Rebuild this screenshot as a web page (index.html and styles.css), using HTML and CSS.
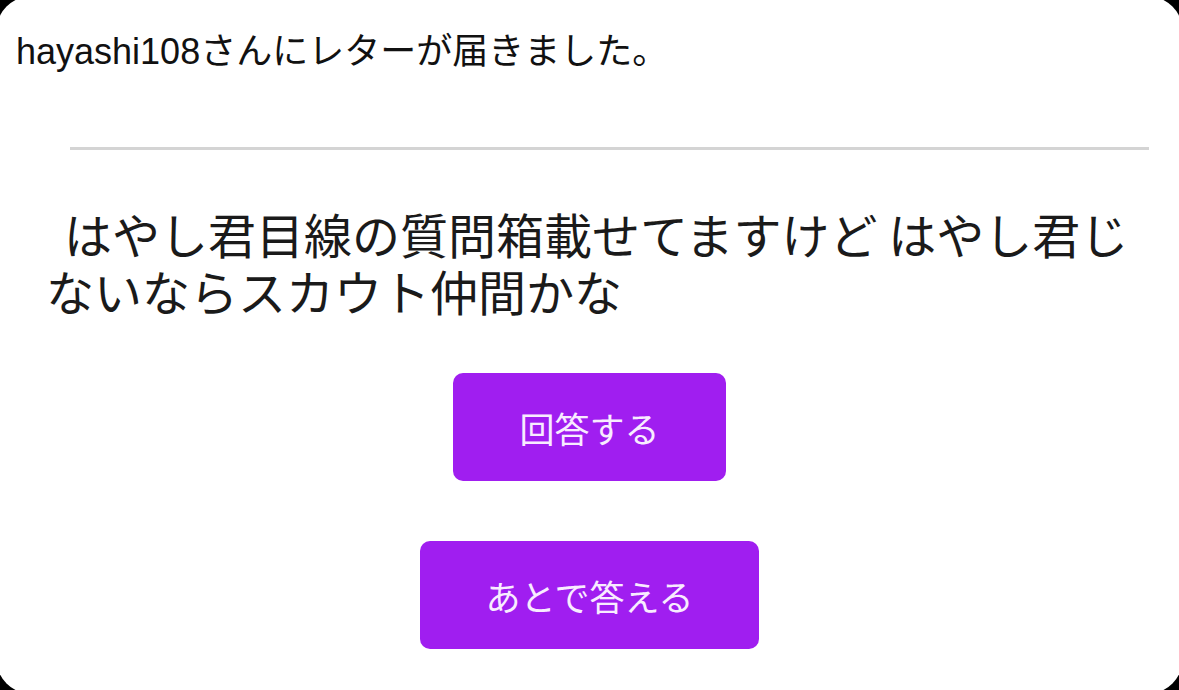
FILE: index.html
```html
<!DOCTYPE html>
<html lang="ja">
	<head>
		<meta charset="UTF-8" />
		<meta name="viewport" content="width=device-width, initial-scale=1.0" />
		<title>レター</title>
		<link rel="stylesheet" href="styles.css">
	</head>
	<body>
		<div class="panel">
			<p class="notice">hayashi108さんにレターが届きました。</p>
			<div class="divider"></div>
			<p class="letter">はやし君目線の質問箱載せてますけど はやし君じないならスカウト仲間かな</p>
			<div class="actions">
				<a href="#" class="btn">回答する</a>
				<a href="#" class="btn">あとで答える</a>
			</div>
		</div>
	</body>
</html>
```

FILE: styles.css
```css
* {
	margin: 0;
	padding: 0;
	box-sizing: border-box;
}
html,
body {
	height: 100%;
	overflow: hidden;
}
body {
	background-color: #000;
	font-family: "Liberation Sans", "Noto Sans CJK JP", sans-serif;
	color: #111;
}
.panel {
	width: calc(100% + 8px);
	height: calc(100% + 8px);
	margin: -4px;
	background-color: #fff;
	border-radius: 36px;
	padding: 4px;
}
.notice {
	font-size: 36px;
	line-height: 43px;
	padding: 30px 0 0 16px;
}
.divider {
	height: 3px;
	background-color: #d4d4d4;
	margin: 74px 30px 0 70px;
}
.letter {
	font-family: "Noto Sans CJK JP", sans-serif;
	font-size: 48px;
	line-height: 57px;
	padding: 55px 30px 0 46px;
	text-indent: 18px;
	color: #1a1a1a;
}
.actions {
	display: flex;
	flex-direction: column;
	align-items: center;
	gap: 60px;
	margin-top: 54px;
}
.btn {
	display: flex;
	align-items: center;
	justify-content: center;
	height: 108px;
	padding: 0 66px;
	border-radius: 10px;
	background-color: #a01ef0;
	color: #f8ecff;
	font-family: "Noto Sans CJK JP", sans-serif;
	font-size: 35px;
	text-decoration: none;
}
```
